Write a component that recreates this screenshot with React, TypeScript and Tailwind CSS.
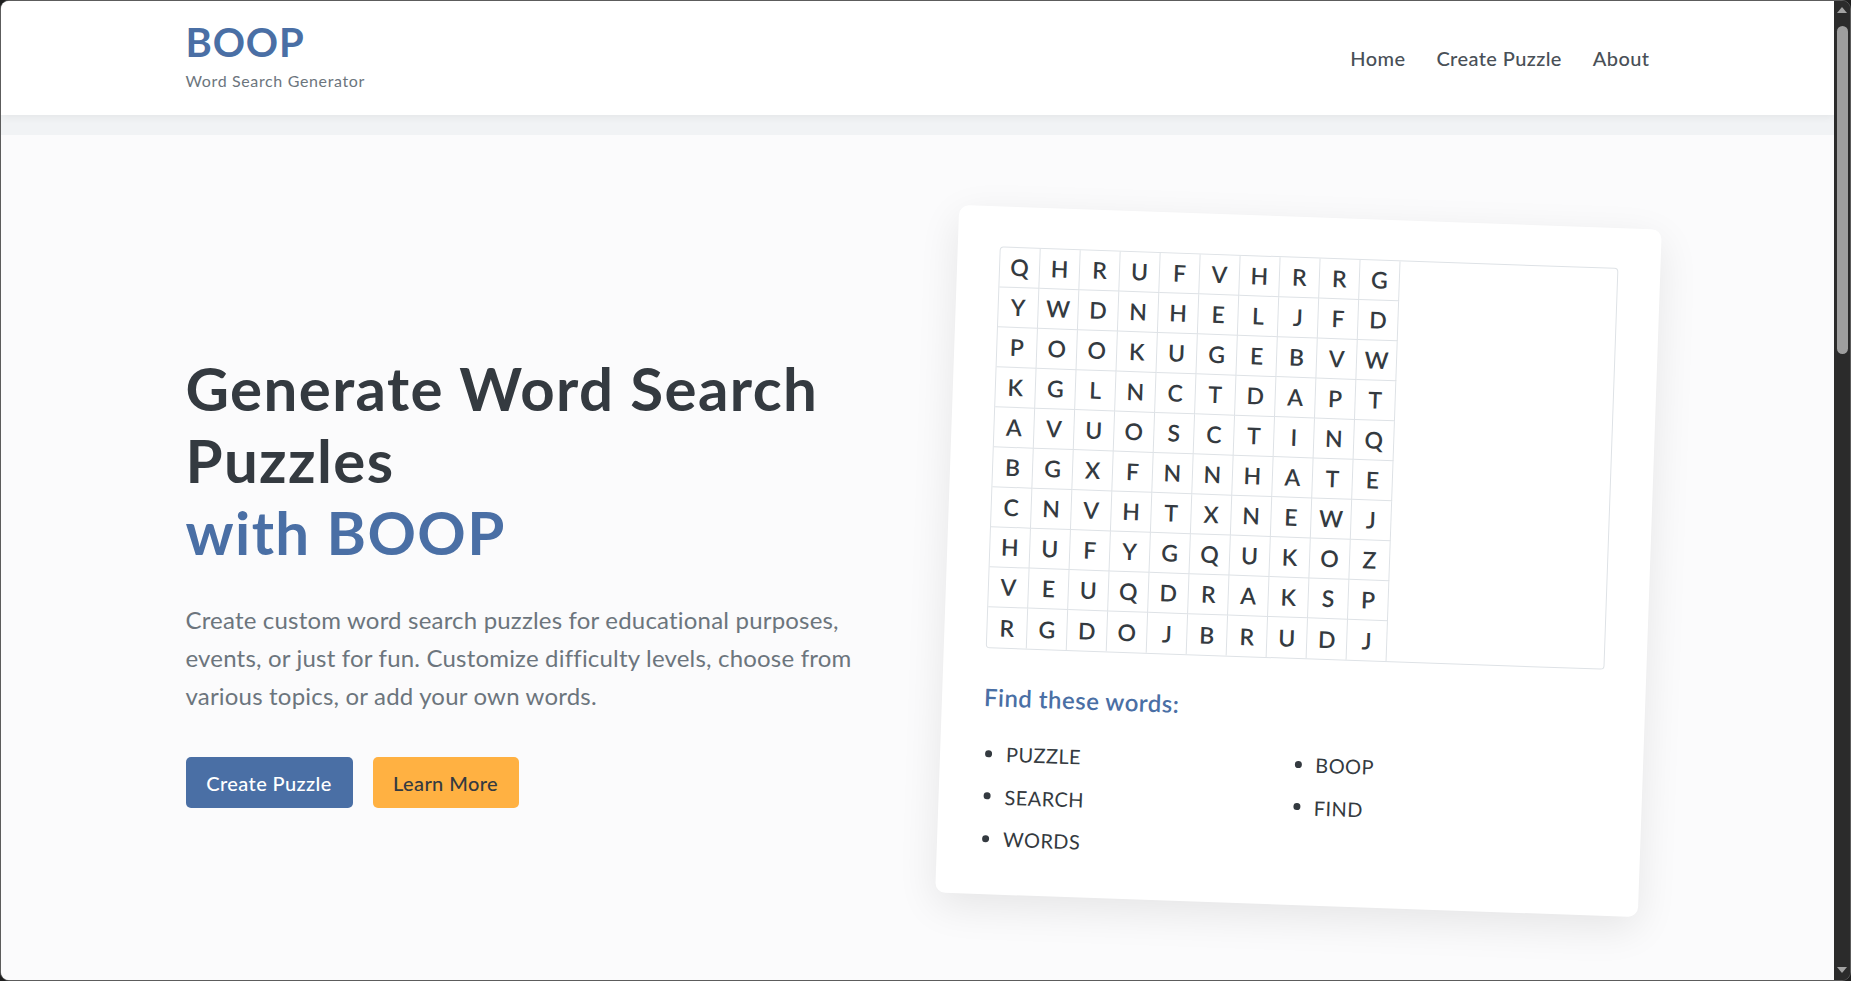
import React from "react";

const grid = [
  "QHRUFVHRRG",
  "YWDNHELJFD",
  "POOKUGEBVW",
  "KGLNCTDAPT",
  "AVUOSCTINQ",
  "BGXFNNHATE",
  "CNVHTXNEWJ",
  "HUFYGQUKOZ",
  "VEUQDRAKSP",
  "RGDOJBRUDJ",
];

const words = ["PUZZLE", "SEARCH", "WORDS", "BOOP", "FIND"];

function Scrollbar() {
  return (
    <div className="flex w-[16px] shrink-0 flex-col items-center bg-[#2b2b2b]">
      <svg width="10" height="6" viewBox="0 0 10 6" className="mt-[6px]">
        <path d="M5 0 L10 6 L0 6 Z" fill="#a3a3a3" />
      </svg>
      <div className="mt-[13px] h-[328px] w-[11px] rounded-full bg-[#9e9e9e]" />
      <div className="flex-1" />
      <svg width="10" height="6" viewBox="0 0 10 6" className="mb-[7px]">
        <path d="M0 0 L10 0 L5 6 Z" fill="#a3a3a3" />
      </svg>
    </div>
  );
}

export default function App() {
  return (
    <div className="h-screen bg-[#1f1f1f] font-[Lato,'Noto_Sans',sans-serif]">
      <div className="flex h-full overflow-hidden rounded-[9px] border border-[#5c5c5c]">
        <div className="h-full flex-1 overflow-hidden bg-[#f1f3f5]">
          {/* header */}
          <header className="relative z-10 h-[114px] bg-white shadow-[0_2px_8px_rgba(0,0,0,0.06)]">
            <div className="mx-auto flex h-full w-[1464px] items-center justify-between">
              <div className="pb-[6px]">
                <div className="text-[40px] leading-[48px] font-bold tracking-[0.02em] text-[#4a6fa5]">
                  BOOP
                </div>
                <div className="mt-[3px] text-[16px] leading-[24px] tracking-[0.04em] text-[#6c757d]">
                  Word Search Generator
                </div>
              </div>
              <nav className="flex gap-[31px] text-[20px] leading-[30px] font-medium tracking-[0.02em] text-[#495057]">
                <a href="#">Home</a>
                <a href="#">Create Puzzle</a>
                <a href="#">About</a>
              </nav>
            </div>
          </header>

          {/* hero */}
          <section className="mt-[20px] h-full bg-[#fbfbfc] pt-[82px]">
            <div className="mx-auto grid w-[1464px] grid-cols-2 items-start">
              <div className="pt-[135px]">
                <h1 className="text-[60px] leading-[72px] font-bold tracking-[0.023em] text-[#343a40]">
                  Generate Word Search Puzzles
                  <span className="block text-[#4a6fa5]">with BOOP</span>
                </h1>
                <p className="mt-[33px] max-w-[700px] text-[24px] leading-[38px] tracking-[0.008em] text-[#6c757d]">
                  Create custom word search puzzles for educational purposes, events, or just
                  for fun. Customize difficulty levels, choose from various topics, or add your
                  own words.
                </p>
                <div className="mt-[42px] flex gap-[20px] text-[20px] font-medium tracking-[0.02em]">
                  <button className="flex h-[51px] w-[167px] items-center justify-center rounded-[5px] bg-[#4a6fa5] text-white">
                    Create Puzzle
                  </button>
                  <button className="flex h-[51px] w-[146px] items-center justify-center rounded-[5px] bg-[#ffb142] text-[#343a40]">
                    Learn More
                  </button>
                </div>
              </div>

              <div className="flex justify-end">
                <div className="w-[703px] rotate-2 rounded-[10px] bg-white px-[42px] pt-[40px] pb-[34px] shadow-[0_12px_40px_rgba(0,0,0,0.09)]">
                  <div className="rounded-[4px] border border-[#dee2e6]">
                    <div className="grid w-fit grid-cols-[repeat(10,40px)]">
                      {grid.map((row, r) =>
                        row.split("").map((ch, c) => (
                          <div
                            key={`${r}-${c}`}
                            className={`flex h-[40px] items-center justify-center border-r border-[#dee2e6] text-[23px] font-semibold text-[#343a40] ${
                              r < 9 ? "border-b" : ""
                            }`}
                          >
                            {ch}
                          </div>
                        )),
                      )}
                    </div>
                  </div>
                  <h3 className="mt-[34px] text-[24px] leading-[29px] font-semibold tracking-[0.02em] text-[#4a6fa5]">
                    Find these words:
                  </h3>
                  <ul className="mt-[21px] columns-2 gap-x-0">
                    {words.map((w) => (
                      <li
                        key={w}
                        className="flex h-[42.5px] break-inside-avoid items-center text-[20px] tracking-[0.02em] text-[#343a40]"
                      >
                        <span className="mr-[14px] ml-[3px] h-[7px] w-[7px] rounded-full bg-[#343a40]" />
                        {w}
                      </li>
                    ))}
                  </ul>
                </div>
              </div>
            </div>
          </section>
        </div>
        <Scrollbar />
      </div>
    </div>
  );
}
